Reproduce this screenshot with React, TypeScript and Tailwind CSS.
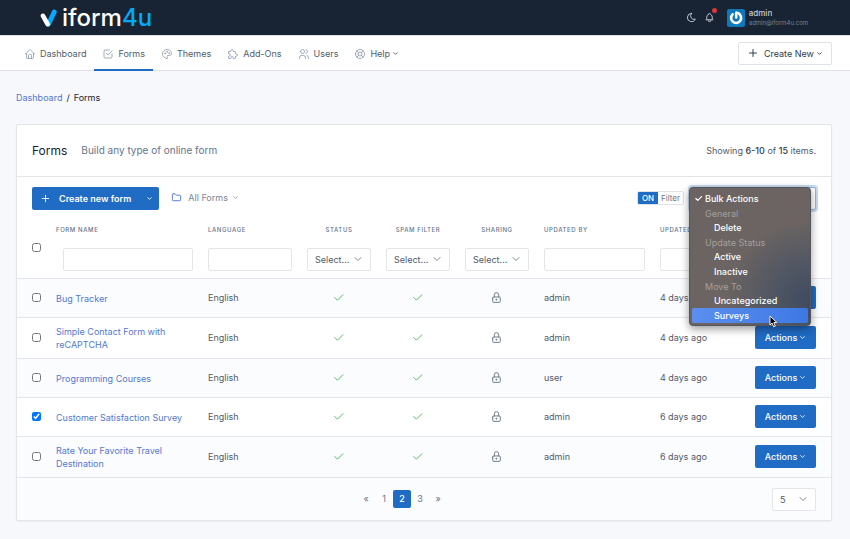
import type { ReactNode } from "react";
import {
  TbBell,
  TbCheck,
  TbCheckbox,
  TbChevronDown,
  TbFolder,
  TbHome,
  TbLifebuoy,
  TbLock,
  TbMoon,
  TbPalette,
  TbPlus,
  TbPuzzle,
  TbUsers,
} from "react-icons/tb";

const navItems = [
  { label: "Dashboard", Icon: TbHome },
  { label: "Forms", Icon: TbCheckbox, active: true },
  { label: "Themes", Icon: TbPalette },
  { label: "Add-Ons", Icon: TbPuzzle },
  { label: "Users", Icon: TbUsers },
  { label: "Help", Icon: TbLifebuoy, menu: true },
];

const rows = [
  { name: "Bug Tracker", by: "admin", at: "4 days ago" },
  { name: "Simple Contact Form with reCAPTCHA", by: "admin", at: "4 days ago" },
  { name: "Programming Courses", by: "user", at: "4 days ago" },
  { name: "Customer Satisfaction Survey", by: "admin", at: "6 days ago", checked: true },
  { name: "Rate Your Favorite Travel Destination", by: "admin", at: "6 days ago" },
];

const bulkMenu = [
  { label: "General", options: ["Delete"] },
  { label: "Update Status", options: ["Active", "Inactive"] },
  { label: "Move To", options: ["Uncategorized", "Surveys"] },
];

const fieldClass = "block h-[23px] w-full rounded-[2px] border border-[#e2e5e9] bg-white outline-none";

function Logo() {
  return (
    <a href="#" className="flex items-center gap-[5px]" aria-label="iform4u">
      <svg width="17" height="18" viewBox="0 0 17 18" fill="none" strokeLinecap="round">
        <path d="M8.4 15.2 L14.2 3" stroke="#00aaff" strokeWidth="4.8" />
        <path d="M3 6.8 L7.6 15.2" stroke="#ffffff" strokeWidth="4.6" />
      </svg>
      <span className="text-[24px] leading-[24px] font-medium text-white">
        iform<span className="text-[#00aaff]">4u</span>
      </span>
    </a>
  );
}

function Avatar() {
  return (
    <svg width="18" height="18" viewBox="0 0 18 18" fill="none">
      <rect width="18" height="18" rx="2" fill="#0d78be" />
      <path d="M5.6 5.4 A5 5 0 1 0 12.2 5" stroke="#fff" strokeWidth="2.6" strokeLinecap="round" />
      <path d="M9.2 3.8 V8.4" stroke="#fff" strokeWidth="2.6" strokeLinecap="round" />
      <path d="M9.2 3.6 C11 3.6 12 4.2 13 5.4" stroke="#fff" strokeWidth="2" />
    </svg>
  );
}

function Picker({ label, value, className = "w-16" }: { label: string; value: string; className?: string }) {
  return (
    <span className={`relative inline-block ${className}`}>
      <select
        aria-label={label}
        className="block h-[23px] w-full appearance-none rounded-[2px] border border-[#e2e5e9] bg-white pl-[7px] text-left text-[9px] font-normal text-[#525b68] outline-none"
      >
        <option>{value}</option>
      </select>
      <TbChevronDown
        size={12}
        strokeWidth={2}
        className="pointer-events-none absolute top-[5px] right-[7px] text-[#7b8797]"
      />
    </span>
  );
}

function HeadCell({ title, children, center }: { title: string; children: ReactNode; center?: boolean }) {
  return (
    <th
      scope="col"
      className={`pt-2 pr-[7px] pb-[7px] pl-2 align-top font-medium ${center ? "text-center" : "text-left"}`}
    >
      <div className="mb-[13px] text-[6px] leading-[10px] tracking-widest whitespace-nowrap text-[#66758a] uppercase">
        {title}
      </div>
      {children}
    </th>
  );
}

function BulkMenu() {
  return (
    <ul
      role="listbox"
      aria-label="Bulk actions"
      className="absolute top-0 right-[5px] z-10 w-[122px] rounded-[4px] border border-[#55565c] bg-[#6b6462] bg-[radial-gradient(ellipse_at_100%_82%,#3f4b61_0%,#505663_22%,#6b6462_50%)] px-[2px] pt-[3px] pb-[2px] text-[9px] font-medium text-white shadow-[0_3px_8px_rgba(0,0,0,0.4)]"
    >
      <li role="option" aria-selected="true" className="flex h-[15px] items-center gap-[2px] pl-[2px]">
        <TbCheck size={9} strokeWidth={3.5} />
        Bulk Actions
      </li>
      {bulkMenu.map((group) => (
        <li key={group.label} role="group" aria-label={group.label}>
          <div className="flex h-[14px] items-center pl-[13px] font-normal text-[#a5a09f]">{group.label}</div>
          <ul>
            {group.options.map((option) => (
              <li
                key={option}
                role="option"
                aria-selected={false}
                className={`flex h-[15px] items-center rounded-[2px] pl-[22px] ${
                  option === "Surveys" ? "bg-linear-to-r from-[#5b8ff0] to-[#3d78e3]" : ""
                }`}
              >
                {option}
              </li>
            ))}
          </ul>
        </li>
      ))}
      <svg
        className="absolute right-8 bottom-[-3px]"
        width="9"
        height="13"
        viewBox="0 0 9 13"
        aria-hidden="true"
      >
        <path
          d="M1 1 V10 L3.1 8.1 L4.7 11.8 L6.3 11.1 L4.8 7.6 L7.8 7.5 Z"
          fill="#000"
          stroke="#fff"
          strokeWidth="0.9"
          strokeLinejoin="round"
        />
      </svg>
    </ul>
  );
}

export default function App() {
  return (
    <div className="min-h-screen bg-[#f6f8fb] font-['Inter',sans-serif] text-[9px] leading-[13px] text-[#525b68]">
      <header className="flex h-[35px] items-center bg-[#182433] pr-[42px] pl-10">
        <Logo />
        <div className="ml-auto flex items-center text-[#c8ced6]">
          <button type="button" aria-label="Dark mode">
            <TbMoon size={11} strokeWidth={2} />
          </button>
          <button type="button" aria-label="Notifications" className="relative ml-[7px]">
            <TbBell size={11} strokeWidth={2} />
            <span className="absolute -top-1 -right-[2px] h-[5px] w-[5px] rounded-full bg-[#d63939]" />
          </button>
          <a href="#" className="ml-3 flex items-center gap-1">
            <Avatar />
            <span>
              <span className="block text-[8px] leading-[10px] font-medium">admin</span>
              <span className="block text-[6px] leading-[9px] text-[#768393]">admin@iform4u.com</span>
            </span>
          </a>
        </div>
      </header>

      <div className="flex h-9 items-stretch border-y border-[#dfe3e8] bg-white pr-[18px] pl-4">
        <nav className="flex" aria-label="Main">
          {navItems.map(({ label, Icon, active, menu }) => (
            <a
              key={label}
              href="#"
              className={`-mb-px flex items-center gap-1 border-b-2 px-2 pt-[2px] ${
                active ? "border-[#206bc4]" : "border-transparent"
              }`}
            >
              <Icon size={12} strokeWidth={1.5} className="text-[#8490a2]" />
              <span>{label}</span>
              {menu && <TbChevronDown size={7} strokeWidth={3} className="-ml-[2px]" />}
            </a>
          ))}
        </nav>
        <button
          type="button"
          className="ml-auto flex h-[23px] items-center self-center rounded-[2px] border border-[#dfe3e8] bg-white px-2 text-[#323c4b]"
        >
          <TbPlus size={12} strokeWidth={2} className="mr-[5px]" />
          Create New
          <TbChevronDown size={7} strokeWidth={3} className="ml-[2px]" />
        </button>
      </div>

      <main className="pt-5 pr-[18px] pb-[18px] pl-4">
        <nav aria-label="Breadcrumb" className="flex gap-1 text-[#182433]">
          <a href="#" className="text-[#5479cb]">
            Dashboard
          </a>
          <span>/</span>
          <span>Forms</span>
        </nav>

        <section className="mt-5 rounded-[2px] border border-[#e2e5e9] bg-white shadow-[0_1px_2px_rgba(24,36,51,0.05)]">
          <div className="flex h-[52px] items-center border-b border-[#e2e5e9] px-[15px]">
            <h1 className="text-[12px] leading-4 text-[#182433]">Forms</h1>
            <p className="ml-[14px] text-[10px] text-[#66758a]">Build any type of online form</p>
            <p className="ml-auto">
              Showing <b className="font-medium text-[#323c4b]">6-10</b> of{" "}
              <b className="font-medium text-[#323c4b]">15</b> items.
            </p>
          </div>

          <div className="flex px-[15px] pt-[10px] pb-[7px]">
            <div className="flex h-[23px] rounded-[2px] bg-[#206bc4] font-semibold text-white">
              <button type="button" className="flex items-center gap-2 pl-2">
                <TbPlus size={11} strokeWidth={2} />
                Create new form
              </button>
              <button type="button" aria-label="More create options" className="ml-2 w-5 pl-[7px]">
                <TbChevronDown size={7} strokeWidth={3} />
              </button>
            </div>
            <button type="button" className="ml-3 flex h-[21px] items-center text-[#7b8593]">
              <TbFolder size={11} strokeWidth={2} className="mr-[6px] text-[#4a75cc]" />
              All Forms
              <TbChevronDown size={7} strokeWidth={2.5} className="ml-1" />
            </button>

            <label className="mt-1 ml-auto flex h-[14px] cursor-pointer overflow-hidden rounded-[2px] border border-[#dfe3e8] text-[8px] leading-3">
              <input type="checkbox" defaultChecked className="sr-only" />
              <span className="w-5 bg-[#206bc4] text-center font-medium text-white">ON</span>
              <span className="w-[25px] text-center text-[#66758a]">Filter</span>
            </label>
            <div className="relative ml-[6px] w-[126px]">
              <select
                aria-label="Bulk Actions"
                className="block h-[23px] w-full appearance-none rounded-[2px] border border-[#90b5e2] bg-white pl-2 outline-none ring-2 ring-[#c7daf0]"
              >
                <option>Bulk Actions</option>
              </select>
              <BulkMenu />
            </div>
          </div>

          <table className="w-full table-fixed border-collapse">
            <colgroup>
              <col className="w-[31px]" />
              <col />
              <col className="w-[99px]" />
              <col className="w-[79px]" />
              <col className="w-[79px]" />
              <col className="w-[79px]" />
              <col className="w-[116px]" />
              <col className="w-[96px]" />
              <col className="w-[83px]" />
            </colgroup>
            <thead>
              <tr>
                <th className="pl-[15px] text-left align-middle">
                  <input type="checkbox" aria-label="Select all forms" className="block h-[9px] w-[9px]" />
                </th>
                <HeadCell title="Form name">
                  <div className="pl-[7px]">
                    <input type="text" aria-label="Form name" className={fieldClass} />
                  </div>
                </HeadCell>
                <HeadCell title="Language">
                  <input type="text" aria-label="Language" className={fieldClass} />
                </HeadCell>
                <HeadCell title="Status" center>
                  <Picker label="Status" value="Select..." />
                </HeadCell>
                <HeadCell title="Spam filter" center>
                  <Picker label="Spam filter" value="Select..." />
                </HeadCell>
                <HeadCell title="Sharing" center>
                  <Picker label="Sharing" value="Select..." />
                </HeadCell>
                <HeadCell title="Updated by">
                  <input type="text" aria-label="Updated by" className={fieldClass} />
                </HeadCell>
                <HeadCell title="Updated at">
                  <input type="text" aria-label="Updated at" className={fieldClass} />
                </HeadCell>
                <td />
              </tr>
            </thead>
            <tbody>
              {rows.map((row) => (
                <tr key={row.name} className="h-[39px] border-t border-[#e2e5e9] odd:bg-[#fbfcfe]">
                  <td className="pb-[2px] pl-[15px]">
                    <input
                      type="checkbox"
                      aria-label={`Select ${row.name}`}
                      defaultChecked={row.checked}
                      className="block h-[9px] w-[9px]"
                    />
                  </td>
                  <td className="py-[7px] pr-[7px] pl-2">
                    <a href="#" className="text-[#5479cb]">
                      {row.name}
                    </a>
                  </td>
                  <td className="pb-px pl-2">English</td>
                  <td className="pb-px">
                    <TbCheck size={13} strokeWidth={1.75} className="mx-auto text-[#4dba5e]" aria-label="Yes" />
                  </td>
                  <td className="pb-px">
                    <TbCheck size={13} strokeWidth={1.75} className="mx-auto text-[#4dba5e]" aria-label="Yes" />
                  </td>
                  <td className="pb-px">
                    <TbLock size={13} strokeWidth={1.75} className="mx-auto text-[#6b7686]" aria-label="Private" />
                  </td>
                  <td className="pb-px pl-2">{row.by}</td>
                  <td className="pb-px pl-2">{row.at}</td>
                  <td className="pr-[15px] pb-px">
                    <button
                      type="button"
                      className="ml-auto flex h-[23px] w-[61px] items-center justify-center gap-[2px] rounded-[2px] bg-[#206bc4] font-medium text-white"
                    >
                      Actions
                      <TbChevronDown size={7} strokeWidth={3} />
                    </button>
                  </td>
                </tr>
              ))}
            </tbody>
          </table>

          <footer className="flex h-[43px] items-center border-t border-[#e2e5e9] bg-[#fbfcfe] px-[15px]">
            <nav aria-label="Pagination" className="flex flex-1 justify-center text-[#66758a]">
              {["«", "1", "2", "3", "»"].map((page) => (
                <a
                  key={page}
                  href="#"
                  className={`h-[18px] w-[18px] rounded-[2px] text-center leading-[18px] ${
                    page === "2" ? "bg-[#206bc4] font-medium text-white" : ""
                  }`}
                >
                  {page}
                </a>
              ))}
            </nav>
            <Picker label="Items per page" value="5" className="w-11" />
          </footer>
        </section>
      </main>
    </div>
  );
}
